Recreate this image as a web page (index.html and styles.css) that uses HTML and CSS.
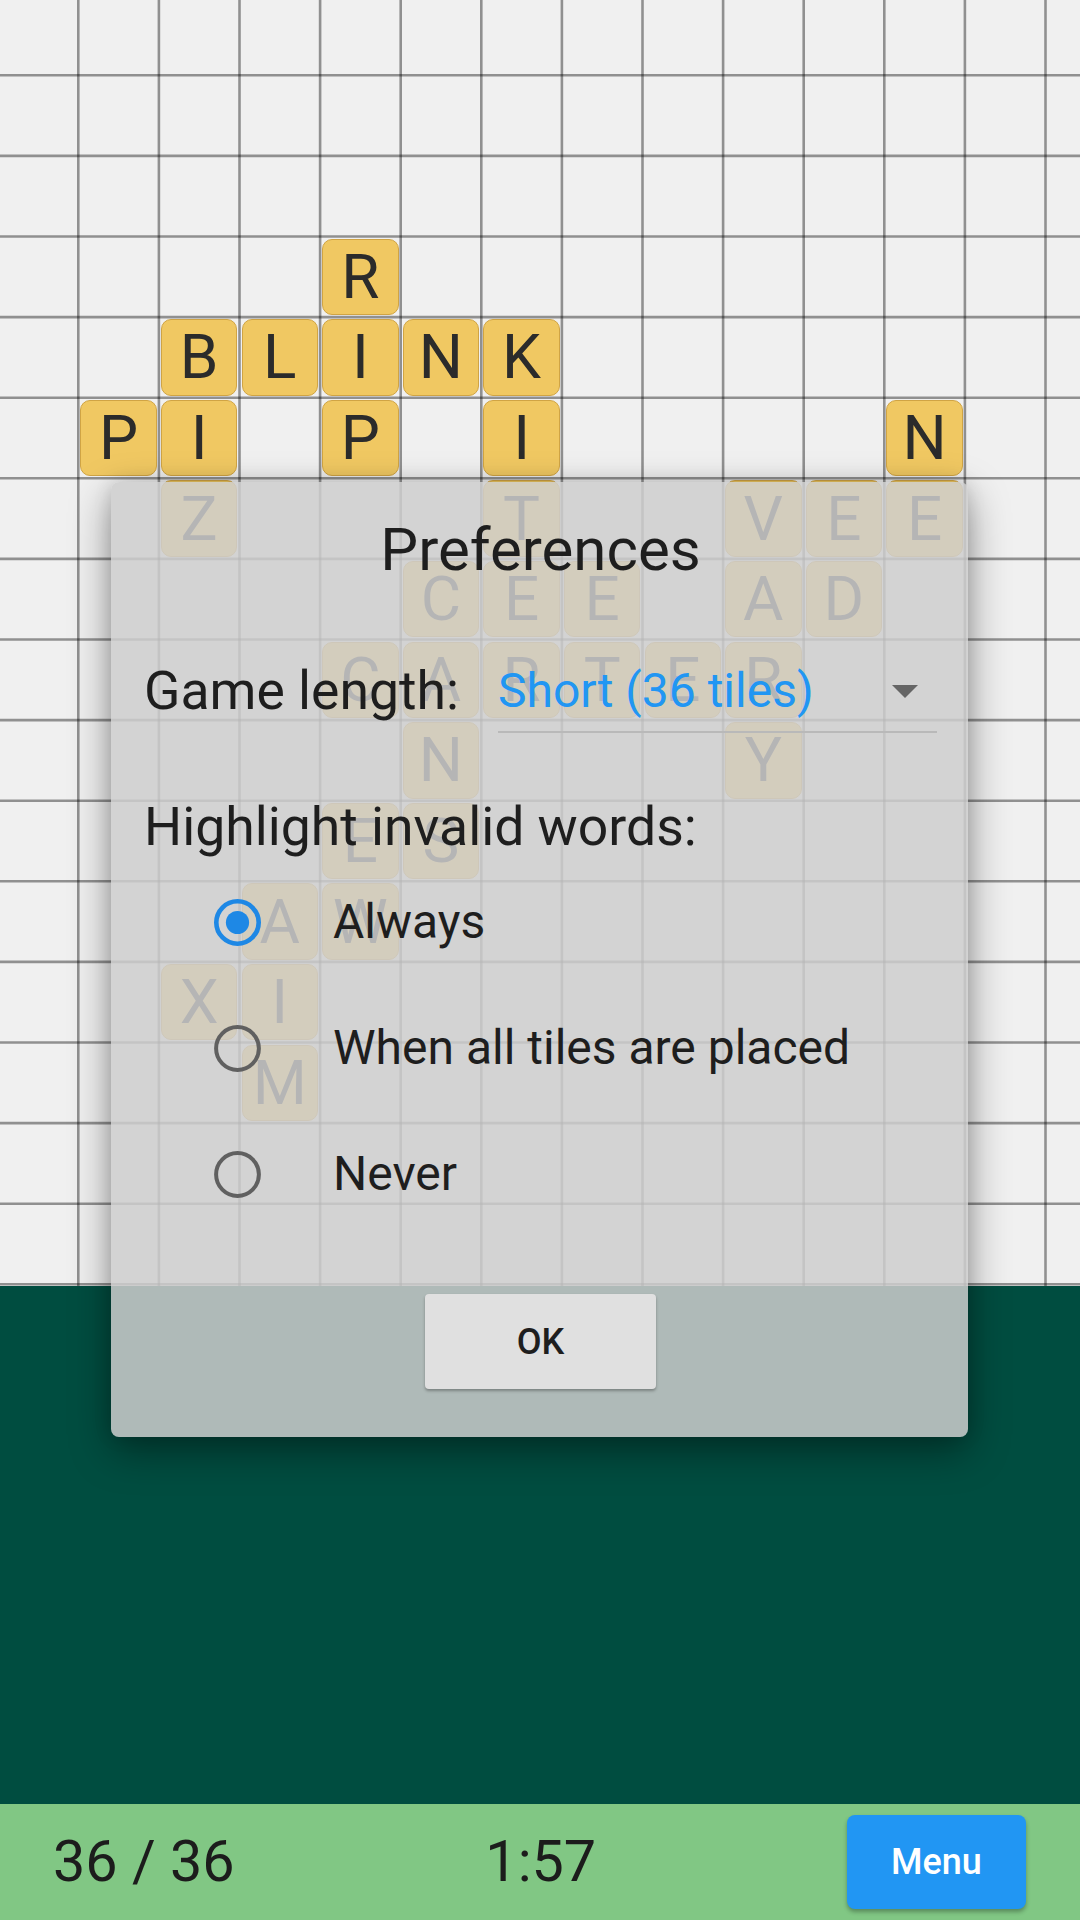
FILE: index.html
```html
<!DOCTYPE html>
<html lang="en">
<head>
<meta charset="utf-8">
<title>Preferences</title>
<link rel="stylesheet" href="styles.css">
</head>
<body>
<div class="app">
  <div class="board">
    <svg class="gridlines" width="1080" height="1286" viewBox="0 0 1080 1286">
      <g class="gl">
        <line x1="78.3" y1="0" x2="78.3" y2="1286"/>
        <line x1="158.9" y1="0" x2="158.9" y2="1286"/>
        <line x1="239.5" y1="0" x2="239.5" y2="1286"/>
        <line x1="320.1" y1="0" x2="320.1" y2="1286"/>
        <line x1="400.7" y1="0" x2="400.7" y2="1286"/>
        <line x1="481.3" y1="0" x2="481.3" y2="1286"/>
        <line x1="561.9" y1="0" x2="561.9" y2="1286"/>
        <line x1="642.5" y1="0" x2="642.5" y2="1286"/>
        <line x1="723.1" y1="0" x2="723.1" y2="1286"/>
        <line x1="803.7" y1="0" x2="803.7" y2="1286"/>
        <line x1="884.3" y1="0" x2="884.3" y2="1286"/>
        <line x1="964.9" y1="0" x2="964.9" y2="1286"/>
        <line x1="1045.5" y1="0" x2="1045.5" y2="1286"/>
        <line x1="0" y1="75.3" x2="1080" y2="75.3"/>
        <line x1="0" y1="155.9" x2="1080" y2="155.9"/>
        <line x1="0" y1="236.5" x2="1080" y2="236.5"/>
        <line x1="0" y1="317.1" x2="1080" y2="317.1"/>
        <line x1="0" y1="397.7" x2="1080" y2="397.7"/>
        <line x1="0" y1="478.3" x2="1080" y2="478.3"/>
        <line x1="0" y1="558.9" x2="1080" y2="558.9"/>
        <line x1="0" y1="639.5" x2="1080" y2="639.5"/>
        <line x1="0" y1="720.1" x2="1080" y2="720.1"/>
        <line x1="0" y1="800.7" x2="1080" y2="800.7"/>
        <line x1="0" y1="881.3" x2="1080" y2="881.3"/>
        <line x1="0" y1="961.9" x2="1080" y2="961.9"/>
        <line x1="0" y1="1042.5" x2="1080" y2="1042.5"/>
        <line x1="0" y1="1123.1" x2="1080" y2="1123.1"/>
        <line x1="0" y1="1203.7" x2="1080" y2="1203.7"/>
        <line x1="0" y1="1284.3" x2="1080" y2="1284.3"/>
      </g>
    </svg>
    <div class="tiles">
      <div class="tile" style="grid-area: 4 / 5">R</div>

      <div class="tile" style="grid-area: 5 / 3">B</div>
      <div class="tile" style="grid-area: 5 / 4">L</div>
      <div class="tile" style="grid-area: 5 / 5">I</div>
      <div class="tile" style="grid-area: 5 / 6">N</div>
      <div class="tile" style="grid-area: 5 / 7">K</div>

      <div class="tile" style="grid-area: 6 / 2">P</div>
      <div class="tile" style="grid-area: 6 / 3">I</div>
      <div class="tile" style="grid-area: 6 / 5">P</div>
      <div class="tile" style="grid-area: 6 / 7">I</div>
      <div class="tile" style="grid-area: 6 / 12">N</div>

      <div class="tile" style="grid-area: 7 / 3">Z</div>
      <div class="tile" style="grid-area: 7 / 7">T</div>
      <div class="tile" style="grid-area: 7 / 10">V</div>
      <div class="tile" style="grid-area: 7 / 11">E</div>
      <div class="tile" style="grid-area: 7 / 12">E</div>

      <div class="tile" style="grid-area: 8 / 6">C</div>
      <div class="tile" style="grid-area: 8 / 7">E</div>
      <div class="tile" style="grid-area: 8 / 8">E</div>
      <div class="tile" style="grid-area: 8 / 10">A</div>
      <div class="tile" style="grid-area: 8 / 11">D</div>

      <div class="tile" style="grid-area: 9 / 5">C</div>
      <div class="tile" style="grid-area: 9 / 6">A</div>
      <div class="tile" style="grid-area: 9 / 7">R</div>
      <div class="tile" style="grid-area: 9 / 8">T</div>
      <div class="tile" style="grid-area: 9 / 9">E</div>
      <div class="tile" style="grid-area: 9 / 10">R</div>

      <div class="tile" style="grid-area: 10 / 6">N</div>
      <div class="tile" style="grid-area: 10 / 10">Y</div>

      <div class="tile" style="grid-area: 11 / 5">E</div>
      <div class="tile" style="grid-area: 11 / 6">S</div>

      <div class="tile" style="grid-area: 12 / 4">A</div>
      <div class="tile" style="grid-area: 12 / 5">W</div>

      <div class="tile" style="grid-area: 13 / 3">X</div>
      <div class="tile" style="grid-area: 13 / 4">I</div>

      <div class="tile" style="grid-area: 14 / 4">M</div>
    </div>
  </div>

  <div class="felt"></div>

  <div class="status">
    <div class="count">36 / 36</div>
    <div class="timer">1:57</div>
    <button class="menu-btn">Menu</button>
  </div>

  <div class="dialog">
    <h1 class="dialog-title">Preferences</h1>

    <div class="pref-row">
      <div class="pref-label">Game length:</div>
      <div class="select">
        <span class="select-value">Short (36 tiles)</span>
        <svg class="select-arrow" width="26" height="13" viewBox="0 0 26 13"><polygon points="0,0 26,0 13,13"/></svg>
      </div>
    </div>

    <div class="section-label">Highlight invalid words:</div>

    <div class="options">
      <div class="option">
        <svg class="radio" width="47" height="47" viewBox="0 0 47 47">
          <circle class="ring on" cx="23.5" cy="23.5" r="21.2"/>
          <circle class="dot" cx="23.5" cy="23.5" r="11.6"/>
        </svg>
        <span class="option-text">Always</span>
      </div>
      <div class="option">
        <svg class="radio" width="47" height="47" viewBox="0 0 47 47">
          <circle class="ring" cx="23.5" cy="23.5" r="21.4"/>
        </svg>
        <span class="option-text">When all tiles are placed</span>
      </div>
      <div class="option">
        <svg class="radio" width="47" height="47" viewBox="0 0 47 47">
          <circle class="ring" cx="23.5" cy="23.5" r="21.4"/>
        </svg>
        <span class="option-text">Never</span>
      </div>
    </div>

    <div class="actions">
      <button class="ok-btn">OK</button>
    </div>
  </div>
</div>
</body>
</html>
```

FILE: styles.css
```css
html, body {
  margin: 0;
  padding: 0;
}

body {
  width: 1080px;
  height: 1920px;
  overflow: hidden;
  font-family: Roboto, "Noto Sans", "Liberation Sans", sans-serif;
  background: #004d40;
}

.app {
  position: relative;
  width: 1080px;
  height: 1920px;
  display: flex;
  flex-direction: column;
}

/* ---------- board ---------- */
.board {
  position: relative;
  flex: none;
  height: 1286px;
  background: #f0f0f0;
  overflow: hidden;
}

.gridlines {
  position: absolute;
  left: 0;
  top: 0;
  display: block;
}

.gl line {
  stroke: rgba(0, 0, 0, 0.4);
  stroke-width: 2.6;
}

.tiles {
  position: absolute;
  left: -2.3px;
  top: -5.3px;
  display: grid;
  grid-template-columns: repeat(14, 80.6px);
  grid-template-rows: repeat(16, 80.6px);
}

.tile {
  margin: 2.15px;
  box-sizing: border-box;
  background: #f0c862;
  border: 1.5px solid #d0a444;
  border-radius: 10px;
  display: flex;
  align-items: center;
  justify-content: center;
  font-size: 62px;
  line-height: 1;
  color: #2b2b2b;
}

/* ---------- felt area ---------- */
.felt {
  flex: 1;
  background: #004d40;
}

/* ---------- status bar ---------- */
.status {
  flex: none;
  height: 116px;
  box-sizing: border-box;
  padding: 0 54px 0 53px;
  background: #81c784;
  display: flex;
  align-items: center;
  justify-content: space-between;
  font-size: 57.5px;
  line-height: 66px;
  color: #1c1c1c;
}

.menu-btn {
  width: 179px;
  height: 94px;
  border: none;
  padding: 0;
  margin: 0;
  border-radius: 8px;
  background: #2196f3;
  color: #ffffff;
  font-family: inherit;
  font-size: 36px;
  font-weight: 500;
  display: flex;
  align-items: center;
  justify-content: center;
  box-shadow: 0 3px 4px rgba(0, 0, 0, 0.3);
}

/* ---------- dialog ---------- */
.dialog {
  position: absolute;
  left: 111px;
  top: 482px;
  width: 857px;
  box-sizing: border-box;
  padding: 33px 31px 48px 33px;
  background: rgba(206, 206, 206, 0.85);
  border-radius: 8px;
  box-shadow: 0 14px 40px rgba(0, 0, 0, 0.4), 0 0 18px rgba(0, 0, 0, 0.12);
  color: #1e1e1e;
}

.dialog-title {
  margin: 0;
  font-size: 60px;
  font-weight: 400;
  line-height: 70px;
  text-align: center;
}

.pref-row {
  margin-top: 74px;
  display: flex;
  justify-content: space-between;
  align-items: flex-start;
}

.pref-label {
  font-size: 53.5px;
  line-height: 64px;
}

.select {
  width: 439px;
  height: 64px;
  padding-bottom: 8px;
  border-bottom: 2px solid #b9b9b9;
  display: flex;
  align-items: center;
}

.select-value {
  font-size: 48px;
  line-height: 64px;
  color: #2196f3;
}

.select-arrow {
  margin-left: auto;
  margin-right: 19px;
  fill: #656565;
}

.section-label {
  margin-top: 62px;
  font-size: 53.5px;
  line-height: 64px;
}

.options {
  display: flex;
  flex-direction: column;
}

.option {
  height: 126px;
  display: flex;
  align-items: center;
  padding-left: 70px;
}

.radio {
  flex: none;
  display: block;
}

.ring {
  fill: none;
  stroke: #606060;
  stroke-width: 4;
}

.ring.on {
  stroke: #1e88e5;
  stroke-width: 4.6;
}

.dot {
  fill: #1e88e5;
}

.option-text {
  margin-left: 72px;
  font-size: 48px;
  line-height: 64px;
}

.actions {
  margin-top: 57px;
  display: flex;
  justify-content: center;
}

.ok-btn {
  width: 231px;
  height: 95px;
  border: none;
  padding: 0;
  margin: 0;
  border-radius: 4px;
  background: #e0e0e0;
  color: #1e1e1e;
  font-family: inherit;
  font-size: 36px;
  font-weight: 500;
  display: flex;
  align-items: center;
  justify-content: center;
  box-shadow: 0 2px 3px rgba(0, 0, 0, 0.3);
}
```
